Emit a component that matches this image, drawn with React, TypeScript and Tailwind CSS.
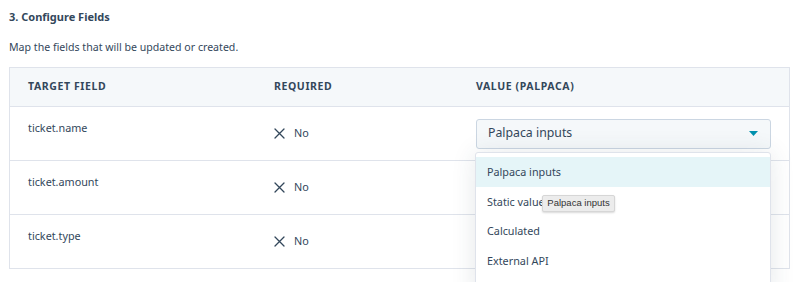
import React from "react";

const XIcon = () => (
  <svg width="11" height="11" viewBox="0 0 11 11" className="shrink-0">
    <path d="M1 1 L10 10 M10 1 L1 10" stroke="#33475b" strokeWidth="1.3" strokeLinecap="round" />
  </svg>
);

const Caret = () => (
  <svg width="9" height="5" viewBox="0 0 9 5">
    <path d="M0 0 H9 L4.5 5 Z" fill="#0091ae" />
  </svg>
);

const rows = ["ticket.name", "ticket.amount", "ticket.type"];

export default function App() {
  return (
    <div
      className="relative h-[282px] w-[800px] overflow-hidden bg-white text-[#33475b]"
      style={{ fontFamily: "'Noto Sans', 'Liberation Sans', sans-serif" }}
    >
      <div className="px-[9px] pt-[9px]">
        <div className="text-[11px] font-bold leading-[16px]">3. Configure Fields</div>
        <div className="mt-[14px] text-[10.6px] leading-[16px]">Map the fields that will be updated or created.</div>
        <div className="mt-[12px] w-[781px] border border-[#dfe3eb]">
          <div className="grid h-[39px] grid-cols-[246px_202px_1fr] items-center border-b border-[#dfe3eb] bg-[#f5f8fa] text-[10.5px] font-bold tracking-[0.6px]">
            <div className="pl-[18px]">TARGET FIELD</div>
            <div className="pl-[18px]">REQUIRED</div>
            <div className="pl-[18px]">VALUE (PALPACA)</div>
          </div>
          {rows.map((r, i) => (
            <div
              key={r}
              className={`grid grid-cols-[246px_202px_1fr] ${i < 2 ? "h-[54px] border-b border-[#dfe3eb]" : "h-[53px]"}`}
            >
              <div className="pl-[18px] pt-[13px] text-[10.8px] leading-[16px]">{r}</div>
              <div className="flex items-center gap-[9px] pl-[18px] text-[10.8px]">
                <XIcon />
                <span>No</span>
              </div>
              <div className="flex items-center pl-[18px] pr-[18px]">
                <div className="flex h-[30px] w-full items-center justify-between rounded-[3px] border border-[#cbd6e2] bg-[#f5f8fa] pl-[11px] pr-[12px] text-[12.3px]">
                  <span>{i === 0 ? "Palpaca inputs" : ""}</span>
                  <Caret />
                </div>
              </div>
            </div>
          ))}
        </div>
      </div>

      <div className="absolute left-[475px] top-[152px] h-[150px] w-[296px] rounded-[3px] border border-[#dfe3eb] bg-white pt-[4px] text-[10.8px] shadow-[0_1px_24px_rgba(45,62,80,0.12)]">
        <div className="flex h-[30px] items-center bg-[#e5f5f8] pl-[11px]">Palpaca inputs</div>
        <div className="flex h-[30px] items-center pl-[11px]">Static value</div>
        <div className="flex h-[29px] items-center pl-[11px]">Calculated</div>
        <div className="flex h-[30px] items-center pl-[11px]">External API</div>
      </div>

      <div
        className="absolute left-[542px] top-[195px] flex h-[17px] w-[73px] items-center justify-center rounded-[2px] border border-[#d6d6d6] bg-[#ececec] text-[9.5px] text-[#333] shadow-[0_1px_2px_rgba(0,0,0,0.15)]"
        style={{ fontFamily: "'Liberation Sans', sans-serif" }}
      >
        Palpaca inputs
      </div>
    </div>
  );
}
